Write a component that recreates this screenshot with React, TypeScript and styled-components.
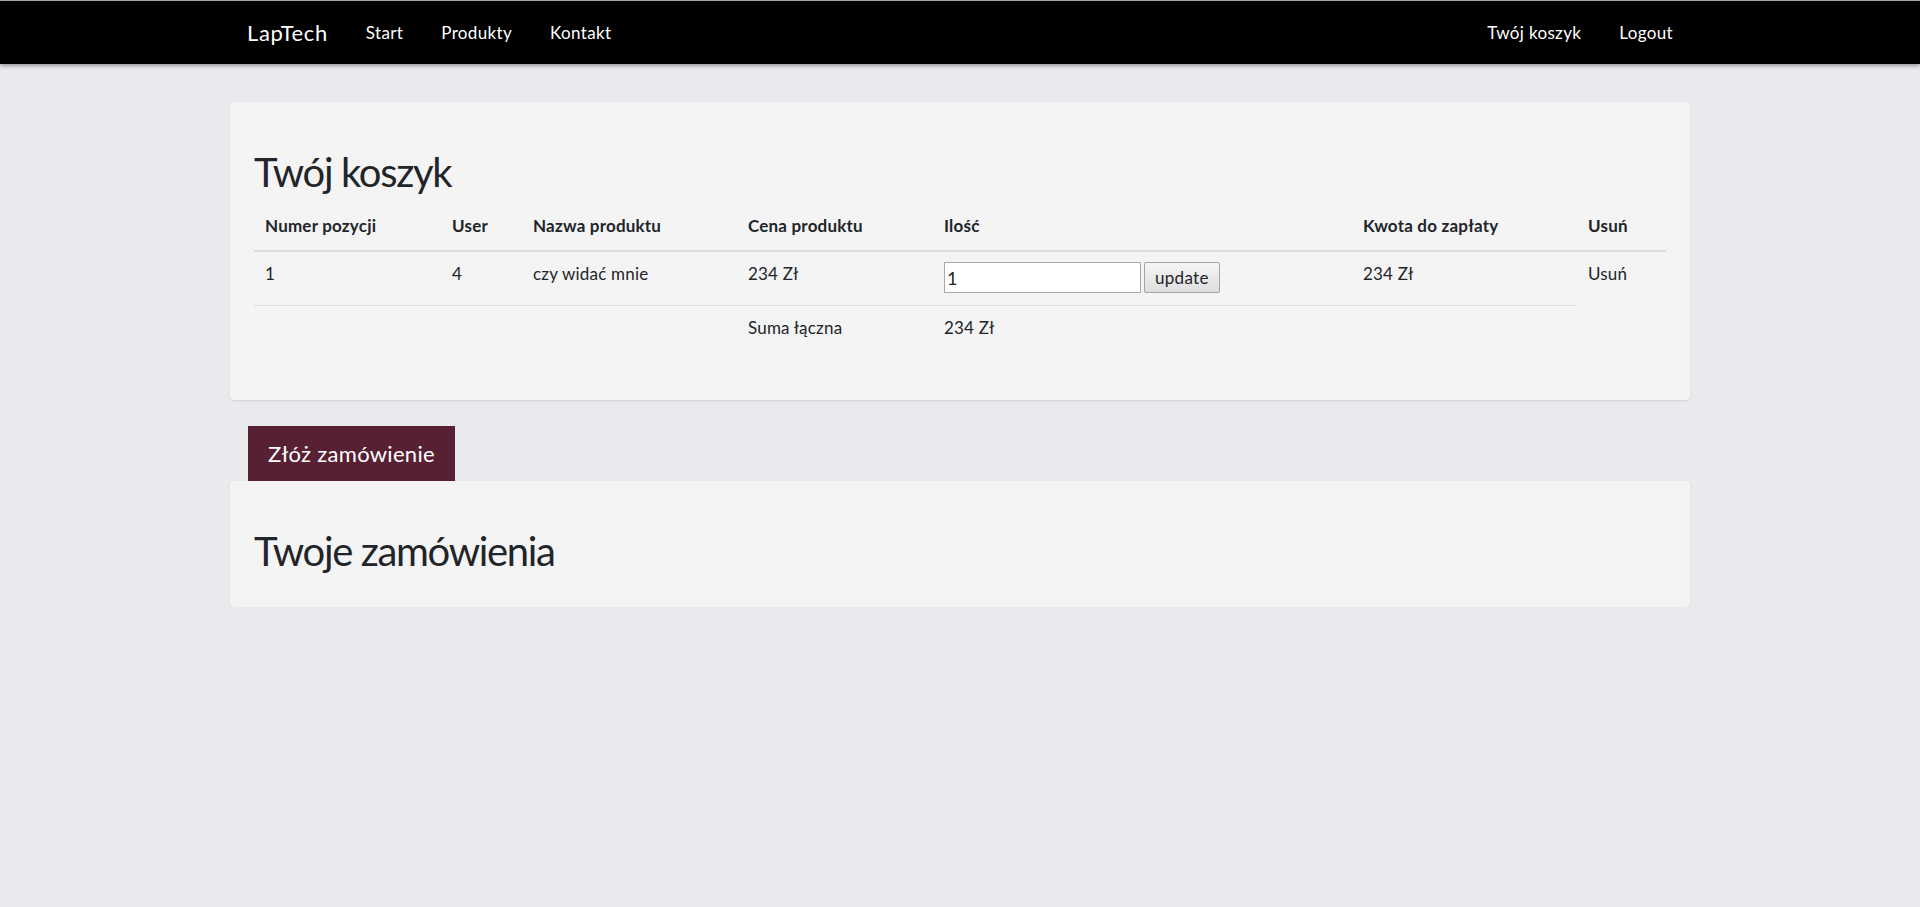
import React from "react";
import styled, { createGlobalStyle } from "styled-components";

const GlobalStyle = createGlobalStyle`
  html, body {
    margin: 0;
    padding: 0;
    background: #e9eaed;
    font-family: Lato, "Open Sans", "Liberation Sans", sans-serif;
    color: #212529;
    font-size: 16px;
    line-height: 1.5;
  }
  * { box-sizing: border-box; }
`;

const NavBar = styled.header`
  background: #000;
  border-top: 1px solid #a3a3a3;
  height: 64px;
  box-shadow: 0 2px 4px rgba(0, 0, 0, 0.35);
  position: relative;
  z-index: 1;
`;

const NavInner = styled.nav`
  width: 1460px;
  height: 100%;
  margin: 0 auto;
  padding: 0 17px;
  display: flex;
  align-items: center;
  justify-content: space-between;
`;

const NavGroup = styled.div`
  display: flex;
  align-items: center;
  gap: 38px;
`;

const Brand = styled.a`
  color: #fff;
  font-size: 22px;
  letter-spacing: 0.6px;
  text-decoration: none;
  line-height: 30px;
`;

const NavLink = styled.a`
  color: #fff;
  font-size: 17px;
  letter-spacing: 0.35px;
  text-decoration: none;
  line-height: 24px;
`;

const Main = styled.main`
  width: 1460px;
  margin: 38px auto 0;
`;

const Card = styled.section`
  background: #f4f4f4;
  border-radius: 4px;
  box-shadow: 0 1px 2px rgba(0, 0, 0, 0.1);
  padding: 24px 24px 26px;
`;

const Title = styled.h1`
  font-size: 40px;
  font-weight: 400;
  letter-spacing: -1.35px;
  line-height: 1.2;
  margin: 22px 0 6px;
`;

const Table = styled.table`
  width: 100%;
  border-collapse: collapse;
  table-layout: fixed;
  margin-bottom: 20px;
  font-size: 17px;
  letter-spacing: 0.2px;
  line-height: 24px;
`;

const Th = styled.th<{ $w?: number }>`
  width: ${(p) => (p.$w ? `${p.$w}px` : "auto")};
  text-align: left;
  font-weight: 700;
  padding: 12px 11px;
  border-bottom: 2px solid #dcdcdc;
  vertical-align: bottom;
`;

const Td = styled.td<{ $tight?: boolean }>`
  padding: ${(p) => (p.$tight ? "10px 11px 12px" : "10px 11px 14px")};
  vertical-align: top;
  border-top: 1px solid #dedede;
`;

const QtyForm = styled.form`
  display: flex;
  align-items: center;
  gap: 3px;
  margin: 0;
`;

const QtyInput = styled.input`
  width: 197px;
  height: 31px;
  border: 1px solid #a9a9a9;
  background: #fff;
  font-family: Lato, "Liberation Sans", sans-serif;
  font-size: 18px;
  color: #212529;
  padding: 0 2px;
  margin: 0;
`;

const UpdateButton = styled.button`
  height: 31px;
  padding: 0 10px;
  border: 1px solid #a5a5a5;
  border-radius: 2px;
  background: linear-gradient(#f6f6f6, #dedede);
  font-family: Lato, "Liberation Sans", sans-serif;
  font-size: 17px;
  letter-spacing: 0.3px;
  color: #212529;
`;

const OrderButton = styled.button`
  display: block;
  margin: 26px 0 0 18px;
  background: #572133;
  color: #fff;
  border: none;
  border-radius: 0;
  font-family: Lato, "Liberation Sans", sans-serif;
  font-size: 22px;
  letter-spacing: 0.3px;
  line-height: 31px;
  padding: 12px 20px;
`;

export default function App() {
  return (
    <>
      <GlobalStyle />
      <NavBar>
        <NavInner>
          <NavGroup>
            <Brand href="#">LapTech</Brand>
            <NavLink href="#">Start</NavLink>
            <NavLink href="#">Produkty</NavLink>
            <NavLink href="#">Kontakt</NavLink>
          </NavGroup>
          <NavGroup>
            <NavLink href="#">Twój koszyk</NavLink>
            <NavLink href="#">Logout</NavLink>
          </NavGroup>
        </NavInner>
      </NavBar>
      <Main>
        <Card>
          <Title>Twój koszyk</Title>
          <Table>
            <thead>
              <tr>
                <Th $w={187}>Numer pozycji</Th>
                <Th $w={81}>User</Th>
                <Th $w={215}>Nazwa produktu</Th>
                <Th $w={196}>Cena produktu</Th>
                <Th $w={419}>Ilość</Th>
                <Th $w={225}>Kwota do zapłaty</Th>
                <Th>Usuń</Th>
              </tr>
            </thead>
            <tbody>
              <tr>
                <Td>1</Td>
                <Td>4</Td>
                <Td>czy widać mnie</Td>
                <Td>234 Zł</Td>
                <Td $tight>
                  <QtyForm onSubmit={(e) => e.preventDefault()}>
                    <QtyInput type="text" defaultValue="1" />
                    <UpdateButton type="submit">update</UpdateButton>
                  </QtyForm>
                </Td>
                <Td>234 Zł</Td>
                <Td>Usuń</Td>
              </tr>
              <tr>
                <Td></Td>
                <Td></Td>
                <Td></Td>
                <Td>Suma łączna</Td>
                <Td>234 Zł</Td>
                <Td></Td>
              </tr>
            </tbody>
          </Table>
        </Card>
        <OrderButton type="button">Złóż zamówienie</OrderButton>
        <Card>
          <Title>Twoje zamówienia</Title>
        </Card>
      </Main>
    </>
  );
}
